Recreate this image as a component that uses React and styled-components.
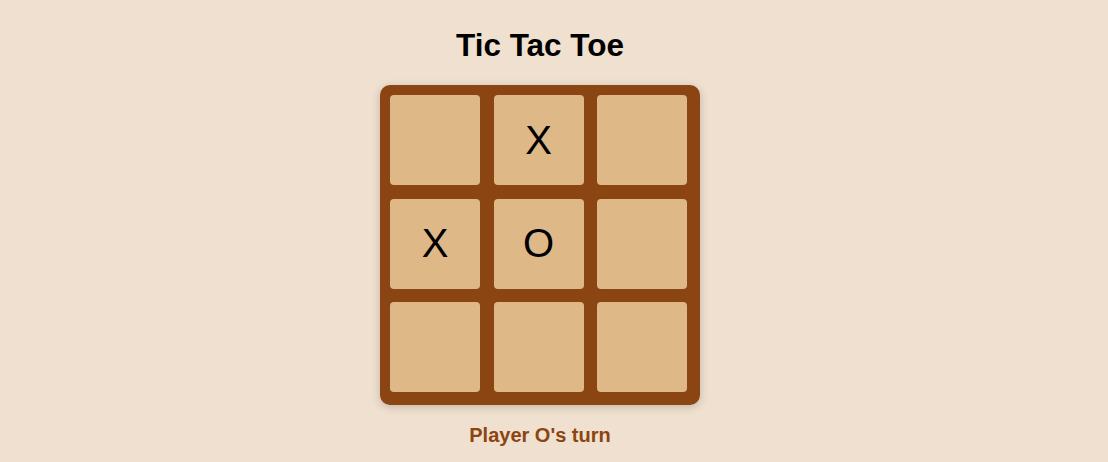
import React from "react";
import styled, { createGlobalStyle } from "styled-components";

const GlobalStyle = createGlobalStyle`
  body {
    margin: 0;
    background: #f0e0d0;
    font-family: "Liberation Sans", Arial, sans-serif;
  }
`;

const Page = styled.div`
  display: flex;
  flex-direction: column;
  align-items: center;
  padding: 27px 28px 0 0;
`;

const Title = styled.h1`
  margin: 0 0 21px;
  font-size: 31.5px;
  font-weight: bold;
  color: #000;
`;

const Board = styled.div`
  display: grid;
  grid-template-columns: repeat(3, 90px);
  grid-template-rows: repeat(3, 90px);
  gap: 13.5px;
  padding: 10px 13px 13px 10px;
  background: #8b4513;
  border-radius: 10px;
  box-shadow: 0 2px 10px rgba(0, 0, 0, 0.2);
`;

const Cell = styled.button`
  display: flex;
  align-items: center;
  justify-content: center;
  padding: 0;
  border: none;
  border-radius: 4px;
  background: #deb887;
  font-family: "Liberation Sans", Arial, sans-serif;
  font-size: 40px;
  color: #000;
  cursor: ${(p) => (p.$filled ? "default" : "pointer")};
`;

const Status = styled.p`
  margin: 19px 0 0;
  font-size: 20px;
  font-weight: bold;
  color: #8b4513;
`;

const initial = [null, "X", null, "X", "O", null, null, null, null];

export default function App() {
  const [squares, setSquares] = React.useState(initial);
  const xCount = squares.filter((s) => s === "X").length;
  const oCount = squares.filter((s) => s === "O").length;
  const next = xCount > oCount ? "O" : "X";

  const play = (i) => {
    if (squares[i]) return;
    const copy = squares.slice();
    copy[i] = next;
    setSquares(copy);
  };

  return (
    <Page>
      <GlobalStyle />
      <Title>Tic Tac Toe</Title>
      <Board>
        {squares.map((s, i) => (
          <Cell key={i} $filled={!!s} onClick={() => play(i)}>
            {s}
          </Cell>
        ))}
      </Board>
      <Status>Player {next}'s turn</Status>
    </Page>
  );
}
